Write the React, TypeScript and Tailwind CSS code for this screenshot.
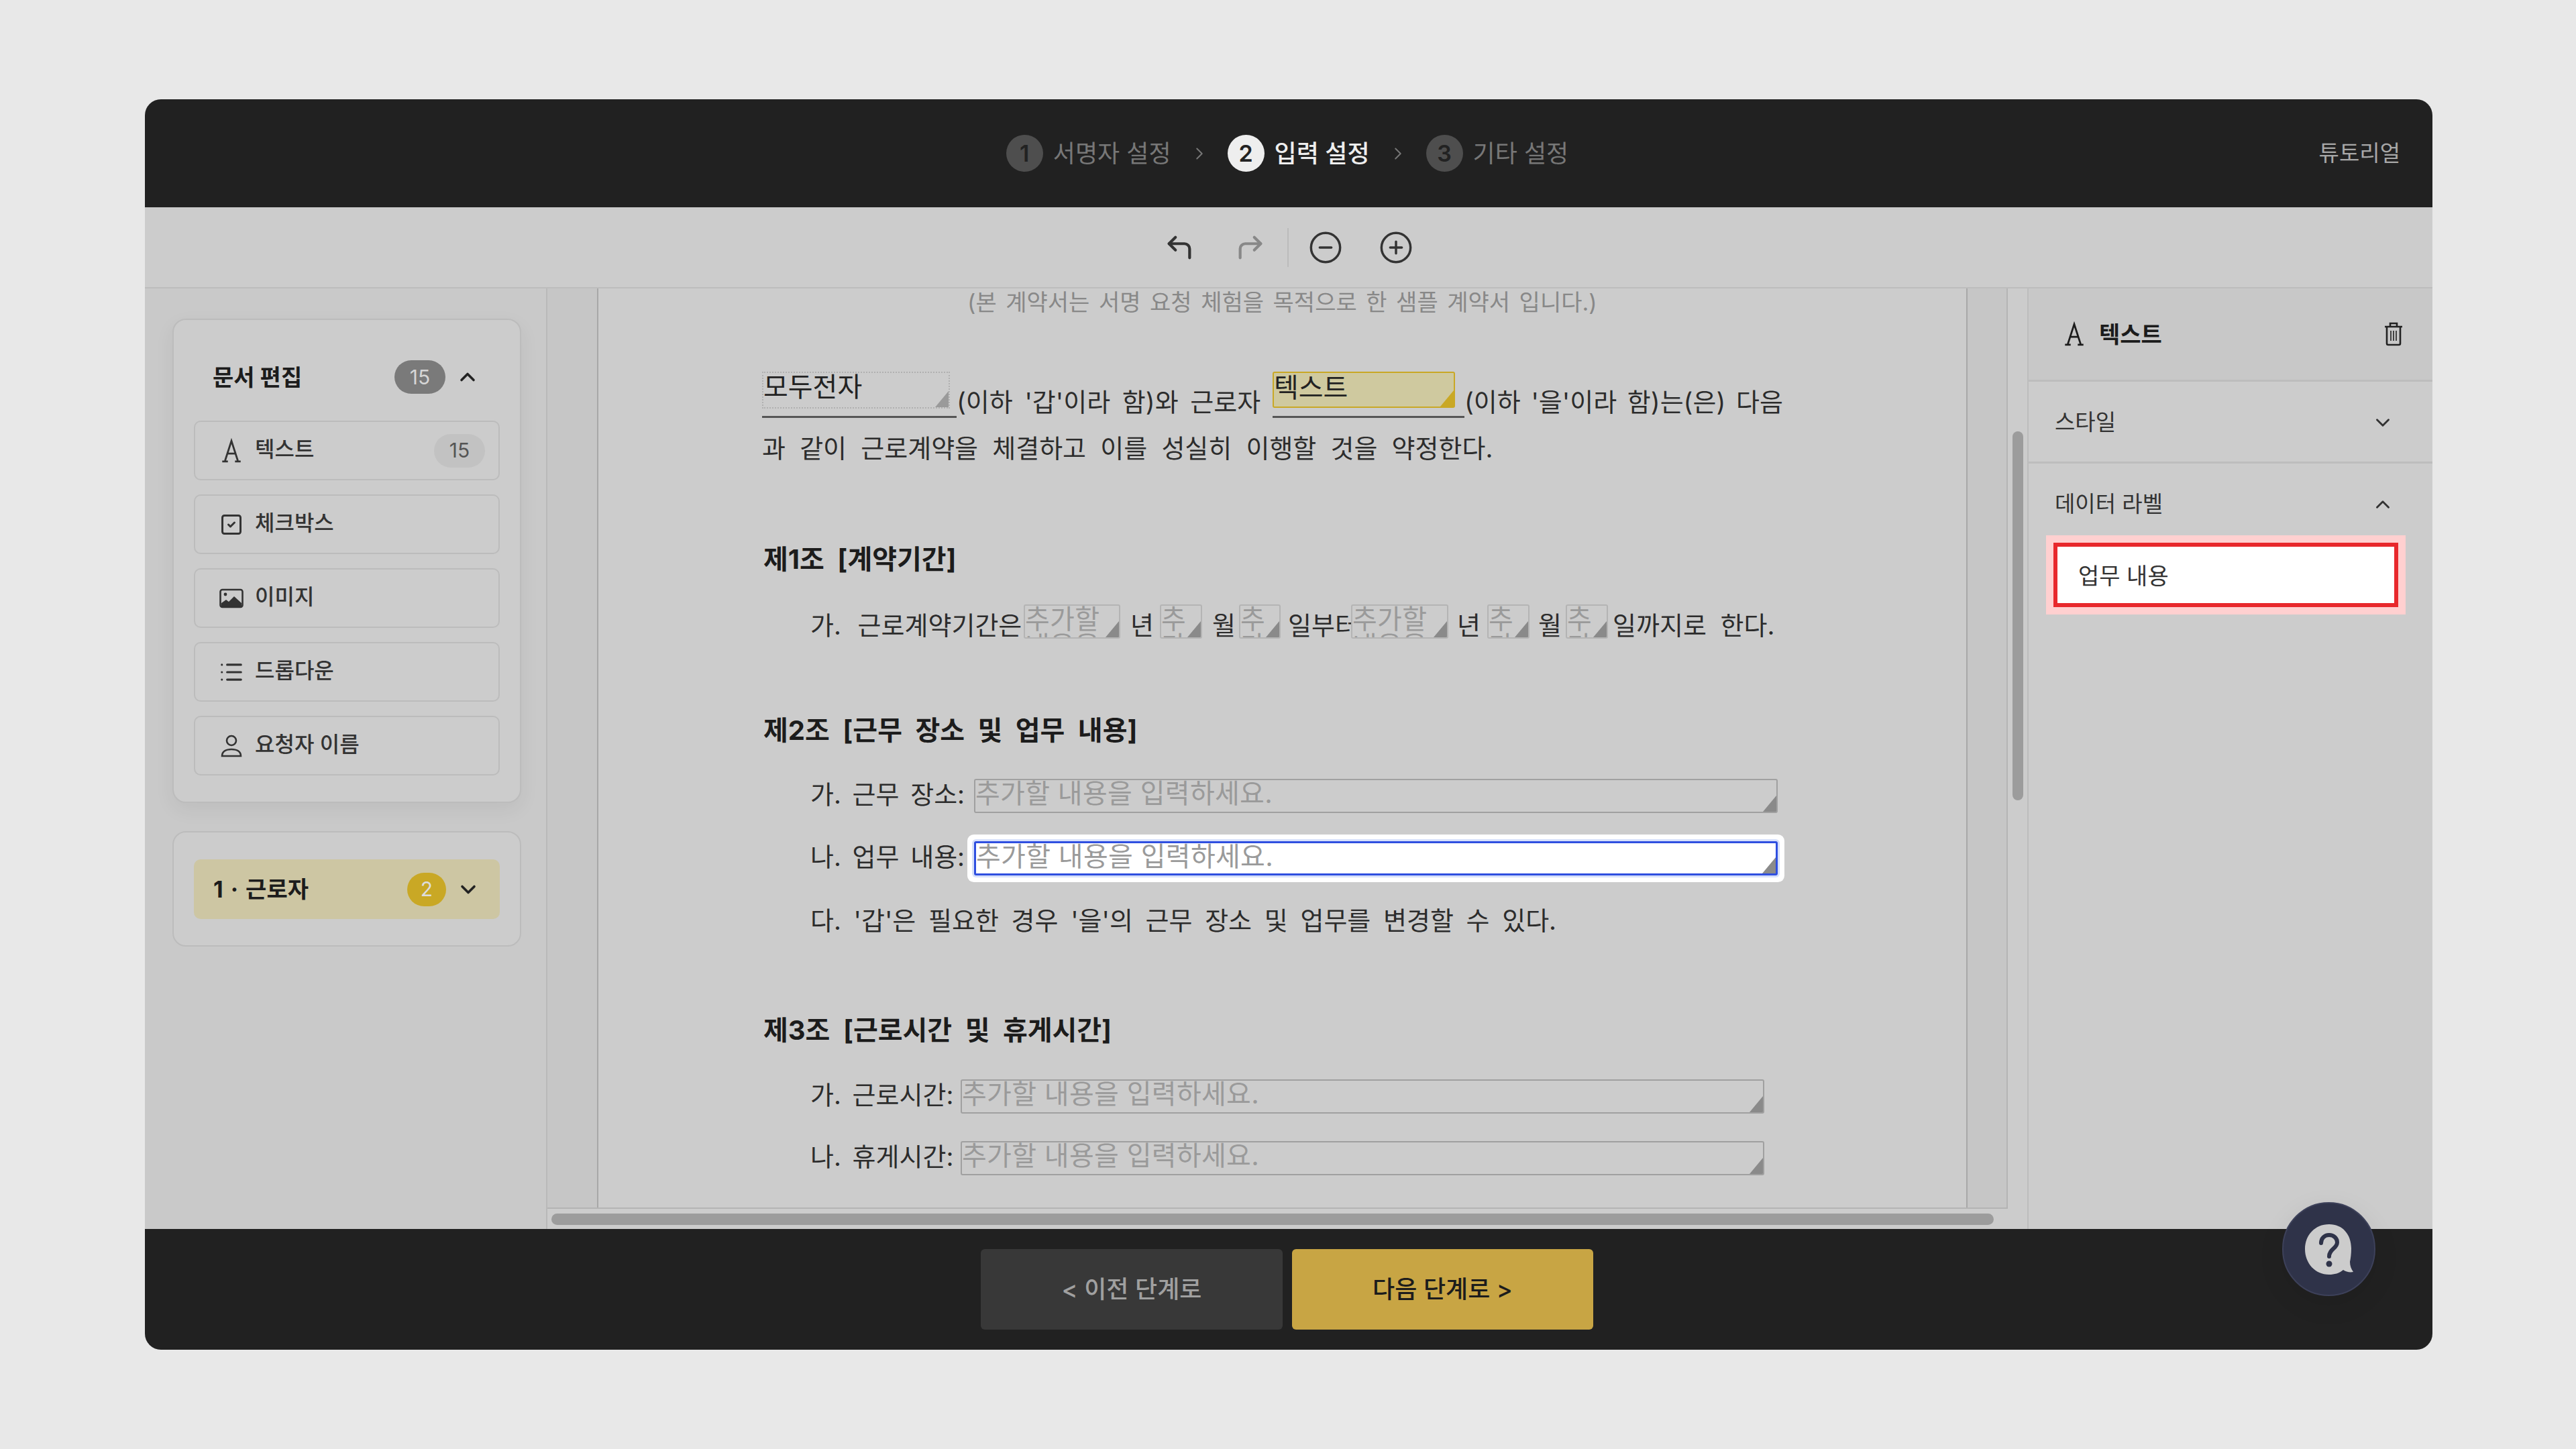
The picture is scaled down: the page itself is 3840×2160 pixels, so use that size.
import { ChevronDown, ChevronRight, ChevronUp, CirclePlus, CircleMinus, CornerUpLeft, CornerUpRight, List, SquareCheck } from 'lucide-react';
import { ReactNode } from 'react';

const FONT = 'font-["Inter","Noto_Sans_CJK_KR","Noto_Sans",sans-serif]';
const PLACEHOLDER = '추가할 내용을 입력하세요.';

const LetterIcon = ({ className }: { className: string }) => (
  <svg viewBox="0 0 30 36" fill="none" stroke="currentColor" strokeWidth="2.6" className={className}>
    <path d="M6 32 15 4l9 28M9 22h12M2 33h8M20 33h8" />
  </svg>
);

const ImageIcon = () => (
  <svg viewBox="0 0 36 30" className="h-[30px] w-[36px] text-[#333]">
    <rect x="1.5" y="2" width="33" height="26" rx="3" fill="none" stroke="currentColor" strokeWidth="2.6" />
    <circle cx="9" cy="9" r="2.4" fill="currentColor" />
    <path d="M3 27v-5l7-5 4 3 8-8 11 10v5z" fill="currentColor" />
  </svg>
);

const PersonIcon = () => (
  <svg viewBox="0 0 32 34" fill="none" stroke="currentColor" strokeWidth="2.6" className="h-[34px] w-[32px] text-[#333]">
    <circle cx="16" cy="9" r="7" />
    <path d="M2 32c0-7 6-10 14-10s14 3 14 10z" />
  </svg>
);

const TrashIcon = () => (
  <svg viewBox="0 0 30 36" fill="none" stroke="currentColor" strokeWidth="2.6" className="h-[36px] w-[30px] text-[#222]">
    <path d="M2 7h26M10 6V2h10v4M5 7v25a2 2 0 0 0 2 2h16a2 2 0 0 0 2-2V7" />
    <path d="M11 13v15M15 13v15M19 13v15" strokeWidth="1.6" />
  </svg>
);

const HelpIcon = () => (
  <svg viewBox="0 0 74 76" className="h-[76px] w-[74px]">
    <path d="M37 1C57 1 70 16 70 37c0 8-1 15-2 20 0 6 2 11 5 15-5 1-11 0-15-3-6 5-13 7-21 7C16 76 1 59 1 38S16 1 37 1z" fill="#cccccc" />
    <path d="M25 29c0-7 5-12 12-12s12 5 12 11c0 9-12 10-12 21" fill="none" stroke="#2f3349" strokeWidth="6" strokeLinecap="round" />
    <circle cx="37" cy="60" r="4.5" fill="#2f3349" />
  </svg>
);

const Step = ({ num, label, active }: { num: number; label: string; active?: boolean }) => (
  <div className="flex items-center gap-[15px]">
    <span className={`flex h-[55px] w-[55px] items-center justify-center rounded-full text-[34px] font-semibold ${active ? 'bg-[#eeeeee] text-[#222]' : 'bg-[#4e4e4e] text-[#222]'}`}>{num}</span>
    <span className={`text-[36px] ${active ? 'font-medium text-[#eeeeee]' : 'text-[#777]'}`}>{label}</span>
  </div>
);

const ToolItem = ({ icon, label, count }: { icon: ReactNode; label: string; count?: number }) => (
  <div className="flex h-[89px] items-center rounded-[10px] border-2 border-[#bcbcbc] pr-[20px]">
    <span className="flex w-[89px] shrink-0 justify-center pl-[18px] text-[#333]">{icon}</span>
    <span className="pb-[4px] text-[32px] font-medium text-[#333]">{label}</span>
    {count && <span className="ml-auto flex h-[50px] w-[76px] items-center justify-center rounded-full bg-[#c2c2c2] text-[30px] text-[#555]">{count}</span>}
  </div>
);

// resize grip in the lower right corner of a field
const Grip = ({ color = 'bg-[#8a8a8a]' }: { color?: string }) => (
  <span className={`absolute bottom-0 right-0 h-[24px] w-[20px] [clip-path:polygon(100%_0,100%_100%,0_100%)] ${color}`} />
);

const Field = ({ width, focus }: { width: string; focus?: boolean }) => (
  <div className={`relative h-[51px] shrink-0 overflow-hidden rounded-[3px] border-2 ${width} ${focus ? 'border-[3px] border-[#2f4fe0] bg-white' : 'border-[#a0a0a0]'}`}>
    <p className="break-keep text-[40px] leading-[40px] tracking-[0.3px] text-[#9a9a9a]">{PLACEHOLDER}</p>
    <Grip />
  </div>
);

const Small = ({ width }: { width: string }) => (
  <div className={`relative h-[51px] shrink-0 overflow-hidden rounded-[3px] border-2 border-[#b4b4b4] ${width}`}>
    <p className="whitespace-normal break-keep text-[40px] leading-[40px] tracking-[0.3px] text-[#9a9a9a] [overflow-wrap:anywhere]">{PLACEHOLDER}</p>
    <Grip />
  </div>
);

const Heading = ({ children, className }: { children: ReactNode; className: string }) => (
  <h3 className={`h-[50px] pl-[2px] text-[40px] font-bold leading-[50px] text-[#1c1c1c] [word-spacing:10px] ${className}`}>{children}</h3>
);

const LabelRow = ({ label, gap, children, className }: { label: string; gap: string; children: ReactNode; className: string }) => (
  <div className={`flex items-center pl-[72px] ${className}`}>
    <span className={`-mt-[6px] shrink-0 whitespace-pre text-[38px] leading-[50px] text-[#2c2c2c] [word-spacing:6px] ${gap}`}>{label}</span>
    {children}
  </div>
);

const App = () => (
  <div className={`min-h-screen bg-[#e8e8e8] pl-[216px] pt-[148px] ${FONT}`}>
    <div className="relative flex h-[1864px] w-[3410px] flex-col overflow-hidden rounded-[24px] bg-[#cccccc]">
      <header className="relative flex h-[161px] shrink-0 items-center justify-center gap-[27px] bg-[#212121] pr-[4px]">
        <Step num={1} label="서명자 설정" />
        <ChevronRight size={30} strokeWidth={1.6} className="text-[#777]" />
        <Step num={2} label="입력 설정" active />
        <ChevronRight size={30} strokeWidth={1.6} className="text-[#777]" />
        <Step num={3} label="기타 설정" />
        <span className="absolute right-[48px] text-[33px] text-[#a8a8a8]">튜토리얼</span>
      </header>

      <div className="flex h-[121px] shrink-0 items-center justify-center border-b-2 border-[#bdbdbd]">
        <CornerUpLeft size={46} strokeWidth={2.2} className="text-[#333]" />
        <CornerUpRight size={46} strokeWidth={2.2} className="ml-[60px] text-[#888]" />
        <span className="ml-[32px] h-[58px] w-[2px] bg-[#bbbbbb]" />
        <CircleMinus size={52} strokeWidth={1.6} className="ml-[29px] text-[#333]" />
        <CirclePlus size={52} strokeWidth={1.6} className="ml-[53px] text-[#333]" />
      </div>

      <div className="flex min-h-0 flex-1">
        <aside className="w-[600px] shrink-0 border-r-2 border-[#b9b9b9] bg-[#c9c9c9] pl-[41px] pt-[45px]">
          <section className="h-[722px] w-[520px] rounded-[20px] border-2 border-[#bcbcbc] bg-[#cccccc] px-[30px] shadow-[0_10px_30px_rgba(0,0,0,0.06)]">
            <div className="flex h-[150px] items-center pt-[20px]">
              <span className="pl-[28px] text-[34px] font-bold text-[#1c1c1c]">문서 편집</span>
              <span className="ml-auto flex h-[50px] w-[76px] items-center justify-center rounded-full bg-[#7a7a7a] text-[30px] text-[#d5d5d5]">15</span>
              <ChevronUp size={36} strokeWidth={2.4} className="ml-[15px] mr-[30px] text-[#222]" />
            </div>
            <div className="flex flex-col gap-[21px]">
              <ToolItem icon={<LetterIcon className="h-[38px] w-[32px]" />} label="텍스트" count={15} />
              <ToolItem icon={<SquareCheck size={36} strokeWidth={2} />} label="체크박스" />
              <ToolItem icon={<ImageIcon />} label="이미지" />
              <ToolItem icon={<List size={38} strokeWidth={2} />} label="드롭다운" />
              <ToolItem icon={<PersonIcon />} label="요청자 이름" />
            </div>
          </section>
          <section className="mt-[42px] h-[172px] w-[520px] rounded-[20px] border-2 border-[#bcbcbc] bg-[#cccccc] px-[30px] pt-[40px]">
            <div className="flex h-[89px] items-center rounded-[10px] bg-[#cdc6a3] pl-[29px]">
              <span className="text-[34px] font-bold text-[#1c1c1c] [word-spacing:3px]">1 · 근로자</span>
              <span className="ml-auto flex h-[50px] w-[58px] items-center justify-center rounded-full bg-[#c9a825] text-[30px] text-[#ddd]">2</span>
              <ChevronDown size={36} strokeWidth={2.4} className="ml-[15px] mr-[29px] text-[#222]" />
            </div>
          </section>
        </aside>

        <div className="flex min-w-0 flex-1 flex-col">
          <div className="flex min-h-0 flex-1">
            <div className="flex min-w-0 flex-1 border-b-2 border-r-2 border-[#b4b4b4] bg-[#c6c6c6]">
              <main className="ml-[74px] h-full w-[2043px] shrink-0 overflow-hidden border-x-2 border-[#a8a8a8] bg-[#cccccc] pl-[244px] text-[38px] text-[#2c2c2c]">
                <p className="h-[42px] pl-[306px] text-[34px] leading-[42px] text-[#888] [word-spacing:4px]">(본 계약서는 서명 요청 체험을 목적으로 한 샘플 계약서 입니다.)</p>

                <div className="mt-[82px] flex h-[70px] w-[1522px] items-start">
                  <div className="h-[69px] w-[290px] shrink-0 border-b-[3px] border-[#555]">
                    <div className="relative h-[55px] w-[280px] border-2 border-dotted border-[#b0b0b0] text-[40px] leading-[42px] text-[#222]">
                      모두전자
                      <Grip color="bg-[#9a9a9a]" />
                    </div>
                  </div>
                  <span className="w-[471px] shrink-0 whitespace-pre pt-[20px] leading-[50px] [word-spacing:7px]">(이하 '갑'이라 함)와 근로자</span>
                  <div className="h-[69px] w-[286px] shrink-0 border-b-[3px] border-[#555]">
                    <div className="relative h-[54px] w-[272px] rounded-[3px] border-2 border-[#c9a825] bg-[#cfc99f] text-[40px] leading-[44px] text-[#222]">
                      텍스트
                      <Grip color="bg-[#c9a825]" />
                    </div>
                  </div>
                  <span className="shrink-0 whitespace-pre pt-[20px] leading-[50px] [word-spacing:5px]">(이하 '을'이라 함)는(은) 다음</span>
                </div>
                <p className="mt-[19px] h-[50px] leading-[50px] [word-spacing:10.5px]">과 같이 근로계약을 체결하고 이를 성실히 이행할 것을 약정한다.</p>

                <Heading className="mt-[116px]">제1조 [계약기간]</Heading>

                <div className="mt-[42px] flex h-[51px] items-end whitespace-pre pl-[72px] leading-[40px]">
                  <span className="w-[318px] shrink-0 [word-spacing:14px]">가. 근로계약기간은</span>
                  <Small width="w-[144px]" />
                  <span className="w-[59px] shrink-0 pl-[15px]">년</span>
                  <Small width="w-[63px]" />
                  <span className="w-[55px] shrink-0 pl-[15px]">월</span>
                  <Small width="w-[62px]" />
                  <span className="w-[105px] shrink-0 overflow-hidden pl-[11px]">일부터</span>
                  <Small width="w-[145px]" />
                  <span className="w-[58px] shrink-0 pl-[13px]">년</span>
                  <Small width="w-[63px]" />
                  <span className="w-[54px] shrink-0 pl-[13px]">월</span>
                  <Small width="w-[63px]" />
                  <span className="shrink-0 pl-[7px] [word-spacing:10px]">일까지로 한다.</span>
                </div>

                <Heading className="mt-[112px]">제2조 [근무 장소 및 업무 내용]</Heading>

                <LabelRow label="가. 근무 장소:" gap="w-[244px]" className="mt-[47px]"><Field width="w-[1198px]" /></LabelRow>
                <LabelRow label="나. 업무 내용:" gap="w-[244px]" className="mt-[42px]">
                  <div className="shrink-0 rounded-[3px] shadow-[0_0_0_3px_#d6e0fb,0_0_0_10px_#ffffff]">
                    <Field width="w-[1198px]" focus />
                  </div>
                </LabelRow>
                <p className="mt-[42px] h-[50px] pl-[72px] leading-[50px] [word-spacing:8px]">다. '갑'은 필요한 경우 '을'의 근무 장소 및 업무를 변경할 수 있다.</p>

                <Heading className="mt-[114px]">제3조 [근로시간 및 휴게시간]</Heading>

                <LabelRow label="가. 근로시간:" gap="w-[224px]" className="mt-[48px]"><Field width="w-[1198px]" /></LabelRow>
                <LabelRow label="나. 휴게시간:" gap="w-[224px]" className="mt-[41px]"><Field width="w-[1198px]" /></LabelRow>
              </main>
            </div>
            <div className="h-full w-[29px] shrink-0 pl-[7px] pt-[213px]">
              <div className="h-[550px] w-[16px] rounded-full bg-[#9c9c9c]" />
            </div>
          </div>
          <div className="h-[30px] shrink-0 pl-[6px] pt-[7px]">
            <div className="h-[17px] w-[2150px] rounded-full bg-[#9c9c9c]" />
          </div>
        </div>

        <aside className="w-[604px] shrink-0 border-l-2 border-[#bdbdbd]">
          <div className="flex h-[139px] items-center border-b-[3px] border-[#bdbdbd] bg-[#c8c8c8] pl-[52px] pr-[43px] text-[#1c1c1c]">
            <LetterIcon className="h-[38px] w-[32px]" />
            <span className="ml-[21px] text-[34px] font-bold">텍스트</span>
            <span className="ml-auto"><TrashIcon /></span>
          </div>
          <div className="flex h-[122px] items-center justify-between border-b-[3px] border-[#bdbdbd] pl-[39px] pr-[57px] pt-[3px] text-[33px] text-[#333]">
            스타일
            <ChevronDown size={34} strokeWidth={2} className="text-[#333]" />
          </div>
          <div className="flex h-[118px] items-center justify-between pl-[39px] pr-[57px] pt-[3px] text-[33px] text-[#333]">
            데이터 라벨
            <ChevronUp size={34} strokeWidth={2} className="text-[#333]" />
          </div>
          <div className="ml-[37px] flex h-[96px] w-[514px] items-center border-[6px] border-[#e8282c] bg-white pl-[31px] pt-[2px] text-[34px] text-[#333] outline-[11px] outline-[#ffd0d0]">
            업무 내용
          </div>
        </aside>
      </div>

      <footer className="flex h-[180px] shrink-0 items-center justify-center gap-[14px] bg-[#212121] pr-[5px]">
        <button className="h-[120px] w-[450px] rounded-[6px] bg-[#383838] text-[36px] font-medium text-[#a0a0a0]">&lt; 이전 단계로</button>
        <button className="h-[120px] w-[449px] rounded-[6px] bg-[#c8a544] text-[36px] font-medium text-[#1c1c1c]">다음 단계로 &gt;</button>
      </footer>

      <button className="absolute left-[3186px] top-[1644px] flex h-[140px] w-[139px] items-center justify-center rounded-full border-2 border-[#3d415a] bg-[#2f3349] shadow-[0_12px_40px_rgba(0,0,0,0.08)]">
        <HelpIcon />
      </button>
    </div>
  </div>
);

export default App;
